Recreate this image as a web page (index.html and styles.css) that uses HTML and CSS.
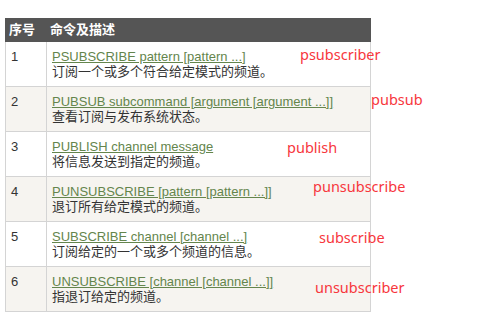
FILE: index.html
```html
<!DOCTYPE html>
<html lang="zh-CN">
<head>
<meta charset="utf-8">
<title>Redis 发布订阅命令</title>
<link rel="stylesheet" href="styles.css">
</head>
<body>
<div class="sheet">
  <table class="reference">
    <thead>
      <tr><th class="num">序号</th><th>命令及描述</th></tr>
    </thead>
    <tbody>
      <tr><td class="num">1</td><td><a href="#">PSUBSCRIBE pattern [pattern ...]</a><br>订阅一个或多个符合给定模式的频道。</td></tr>
      <tr><td class="num">2</td><td><a href="#">PUBSUB subcommand [argument [argument ...]]</a><br>查看订阅与发布系统状态。</td></tr>
      <tr><td class="num">3</td><td><a href="#">PUBLISH channel message</a><br>将信息发送到指定的频道。</td></tr>
      <tr><td class="num">4</td><td><a href="#">PUNSUBSCRIBE [pattern [pattern ...]]</a><br>退订所有给定模式的频道。</td></tr>
      <tr><td class="num">5</td><td><a href="#">SUBSCRIBE channel [channel ...]</a><br>订阅给定的一个或多个频道的信息。</td></tr>
      <tr><td class="num">6</td><td><a href="#">UNSUBSCRIBE [channel [channel ...]]</a><br>指退订给定的频道。</td></tr>
    </tbody>
  </table>

  <!-- handwritten notes placed next to each command -->
  <span class="note" style="left:300px;top:47px">psubscriber</span>
  <span class="note" style="left:371px;top:92px">pubsub</span>
  <span class="note" style="left:287px;top:140px">publish</span>
  <span class="note" style="left:313px;top:179px">punsubscribe</span>
  <span class="note" style="left:319px;top:230px">subscribe</span>
  <span class="note" style="left:315px;top:280px">unsubscriber</span>
</div>
</body>
</html>
```

FILE: styles.css
```css
html, body {
  margin: 0;
  padding: 0;
  background: #fff;
}

.sheet {
  position: relative;
  width: 489px;
  height: 329px;
  padding: 18px 0 0 5px;
  box-sizing: border-box;
  font-family: "Liberation Sans", Arial, "Noto Sans CJK SC", sans-serif;
  font-size: 13px;
  color: #333;
}

.reference {
  width: 366px;
  border-collapse: collapse;
}

.reference th {
  background: #555;
  color: #fff;
  border: 1px solid #555;
  font-weight: bold;
  font-size: 13px;
  line-height: 16px;
  padding: 3px 3px;
  text-align: left;
  vertical-align: top;
}

.reference td {
  border: 1px solid #d4d4d4;
  padding: 7px 5px;
  line-height: 15px;
  vertical-align: top;
}

.reference th.num {
  width: 34px;
}

.reference tbody tr:nth-child(even) td {
  background: #f6f4f0;
}

.reference a {
  color: #64854c;
  text-decoration: underline;
}

.note {
  position: absolute;
  font-family: "Noto Sans", "Noto Sans CJK SC", sans-serif;
  font-size: 14.5px;
  line-height: 14.5px;
  color: #f7373d;
  white-space: nowrap;
}
```
